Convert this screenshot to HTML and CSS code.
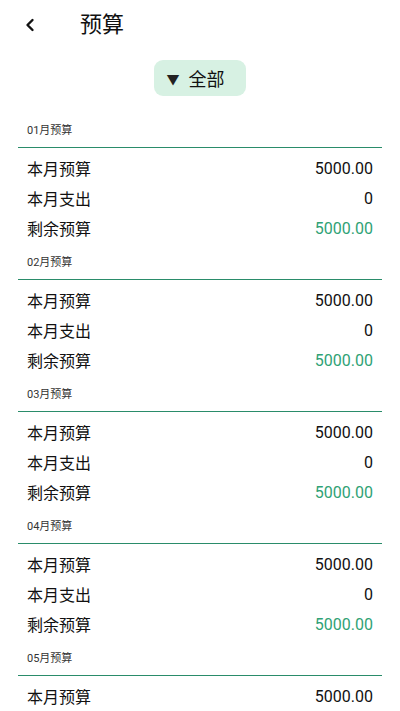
FILE: index.html
```html
<!DOCTYPE html>
<html>

<head>
    <title>预算</title>
    <meta name="viewport" content="width=device-width, initial-scale=1.0">
    <link rel="stylesheet" href="styles.css">
</head>

<body>
    <div class="topbar">
        <span class="back">
            <svg width="12" height="14" viewBox="0 0 12 14"><path d="M8.5 2 L3.5 7 L8.5 12" fill="none" stroke="#111" stroke-width="2.4" stroke-linecap="round" stroke-linejoin="round"/></svg>
        </span>
        <h1 class="title">预算</h1>
    </div>

    <div class="filter">
        <button class="pill"><span class="arrow">▼</span>全部</button>
    </div>

    <div id="list"></div>

    <script>
        // Build month sections
        const list = document.getElementById('list');
        for (let m = 1; m <= 5; m++) {
            const month = String(m).padStart(2, '0');
            const section = document.createElement('div');
            section.className = 'section';
            section.innerHTML = `
                <div class="section-head">${month}月预算</div>
                <div class="rows">
                    <div class="row"><span>本月预算</span><span>5000.00</span></div>
                    <div class="row"><span>本月支出</span><span>0</span></div>
                    <div class="row"><span>剩余预算</span><span class="green">5000.00</span></div>
                </div>`;
            list.appendChild(section);
        }
    </script>
</body>

</html>
```
FILE: styles.css
```css
body {
    font-family: Roboto, "Noto Sans CJK SC", sans-serif;
    margin: 0;
    background-color: #fff;
    color: #111;
    height: 711px;
    overflow: hidden;
}

.topbar {
    display: flex;
    align-items: center;
    height: 50px;
    padding-left: 24px;
}

.back {
    display: flex;
    width: 14px;
}

.title {
    margin: 0 0 0 42px;
    font-size: 22px;
    font-weight: normal;
    line-height: 50px;
}

.filter {
    display: flex;
    justify-content: center;
    padding-top: 10px;
    height: 51px;
}

.pill {
    display: flex;
    align-items: center;
    background-color: #d7f1e3;
    color: #111;
    font-family: Roboto, "Noto Sans CJK SC", sans-serif;
    font-size: 18px;
    height: 36px;
    padding: 0 21px 0 12px;
    border: none;
    border-radius: 9px;
}

.arrow {
    font-size: 13px;
    margin-right: 9px;
    color: #222;
}

.section-head {
    font-size: 11px;
    line-height: 16px;
    color: #333;
    padding: 12px 0 8px 9px;
    margin: 0 18px;
    border-bottom: 1px solid #2a8c6a;
}

.rows {
    padding: 5px 27px 0 27px;
}

.row {
    display: flex;
    justify-content: space-between;
    align-items: center;
    height: 30px;
    font-size: 16px;
}

.green {
    color: #2fa275;
}
```
